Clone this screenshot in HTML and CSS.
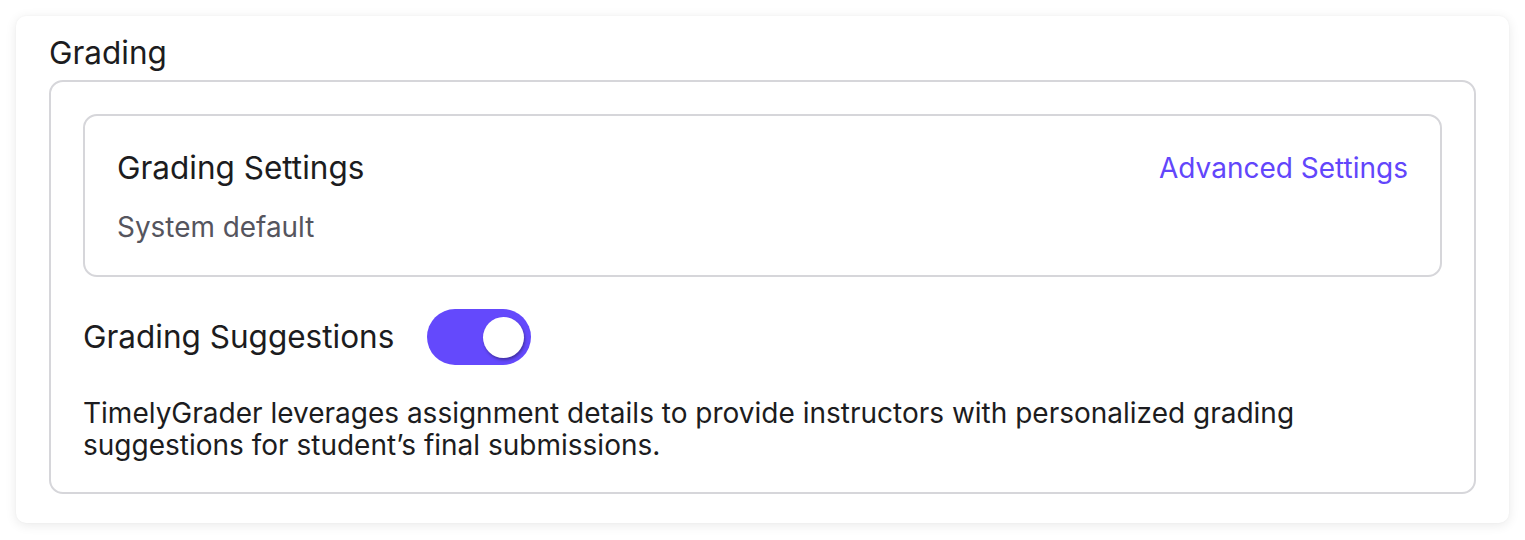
FILE: index.html
```html
<!DOCTYPE html>
<html lang="en">
<head>
<meta charset="utf-8">
<title>Grading</title>
<link rel="stylesheet" href="styles.css">
</head>
<body>
  <section class="card">
    <h2 class="card-title">Grading</h2>
    <div class="panel">
      <div class="settings">
        <div class="settings-head">
          <span class="settings-title">Grading Settings</span>
          <a class="settings-link" href="#">Advanced Settings</a>
        </div>
        <div class="settings-sub">System default</div>
      </div>
      <div class="toggle-row">
        <span class="toggle-label">Grading Suggestions</span>
        <span class="toggle on" role="switch" aria-checked="true"><span class="knob"></span></span>
      </div>
      <p class="desc">TimelyGrader leverages assignment details to provide instructors with personalized grading suggestions for student’s final submissions.</p>
    </div>
  </section>
</body>
</html>
```

FILE: styles.css
```css
* { box-sizing: border-box; }

html, body {
  margin: 0;
  background: #ffffff;
}

body {
  padding: 16px;
  font-family: Inter, "Noto Sans", "Liberation Sans", sans-serif;
  color: #1c1c20;
}

.card {
  background: #ffffff;
  border-radius: 10px;
  box-shadow: 0 2px 12px rgba(0, 0, 0, 0.09), 0 0 2px rgba(0, 0, 0, 0.04);
  padding: 19px 33px 30px 33px;
  height: 507px;
}

.card-title {
  margin: 0 0 9px 0;
  font-size: 31.5px;
  line-height: 36px;
  font-weight: 400;
  color: #1c1c20;
}

.panel {
  border: 2px solid #d6d6da;
  border-radius: 14px;
  padding: 32px 32px 31px 32px;
}

.settings {
  border: 2px solid #d6d6da;
  border-radius: 14px;
  padding: 32px 32px 32px 32px;
}

.settings-head {
  display: flex;
  justify-content: space-between;
  align-items: center;
  height: 40px;
}

.settings-title {
  font-size: 31.5px;
  line-height: 40px;
  color: #1c1c20;
}

.settings-link {
  font-size: 28px;
  line-height: 40px;
  color: #6246fb;
  text-decoration: none;
}

.settings-sub {
  margin-top: 23px;
  font-size: 27.9px;
  line-height: 32px;
  color: #55555e;
}

.toggle-row {
  display: flex;
  align-items: center;
  gap: 33px;
  margin-top: 32px;
  height: 56px;
}

.toggle-label {
  font-size: 31.5px;
  line-height: 40px;
  color: #1c1c20;
}

.toggle {
  position: relative;
  display: inline-block;
  width: 104px;
  height: 56px;
  border-radius: 28px;
  background: #6449fc;
}

.toggle .knob {
  position: absolute;
  top: 8px;
  right: 7px;
  width: 41px;
  height: 41px;
  border-radius: 50%;
  background: #ffffff;
  box-shadow: 1px 2px 3px rgba(0, 0, 0, 0.35);
}

.desc {
  margin: 32px 0 0 0;
  font-size: 28px;
  line-height: 32px;
  color: #1c1c20;
}
```
